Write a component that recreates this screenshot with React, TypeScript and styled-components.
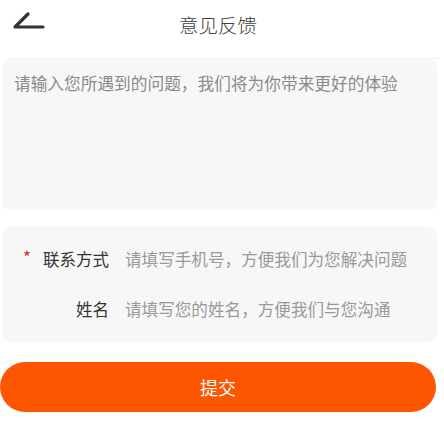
import * as React from 'react';
import styled, { createGlobalStyle } from 'styled-components';

const GlobalStyle = createGlobalStyle`
	body {
		margin: 0;
		background: #ffffff;
		font-family: 'Noto Sans CJK SC', 'Noto Sans', sans-serif;
	}
`;

const Page = styled.div`
	width: 444px;
	padding: 0 7px 0 2px;
	box-sizing: border-box;
`;

const Header = styled.div`
	position: relative;
	height: 59px;
	margin: 0 -1px 0 6px;
	display: flex;
	align-items: center;
	justify-content: center;
	border-bottom: 1px solid #eeeeee;
	box-sizing: border-box;
`;

const BackButton = styled.button`
	position: absolute;
	left: 3px;
	top: 9px;
	width: 34px;
	height: 24px;
	padding: 0;
	border: none;
	background: none;
`;

const Title = styled.h1`
	margin: 0 10px 10px 0;
	font-size: 19.5px;
	font-weight: 300;
	color: #404040;
`;

const Panel = styled.div<{ $height: number }>`
	height: ${props => props.$height}px;
	background: #f7f7f7;
	border-radius: 8px;
	box-sizing: border-box;
`;

const Feedback = styled.div`
	padding: 12px 12px;
	font-size: 16.7px;
	line-height: 24px;
	color: #8a8a8a;
`;

const Form = styled.div`
	margin-top: 17px;
	padding: 7px 0 8px;
	display: flex;
	flex-direction: column;
`;

const Row = styled.div`
	height: 50px;
	display: flex;
	align-items: center;
`;

const Label = styled.div`
	position: relative;
	width: 107px;
	text-align: right;
	font-size: 16.5px;
	color: #333333;
`;

const Star = styled.span`
	position: absolute;
	left: 21px;
	top: -3px;
	color: #d9302a;
	font-size: 17px;
`;

const Placeholder = styled.div`
	margin-left: 16px;
	font-size: 16.6px;
	color: #999999;
`;

const Submit = styled.button`
	margin: 20px 0 0 -2px;
	width: 436px;
	height: 50px;
	border: none;
	border-radius: 25px;
	background: #fe5500;
	color: #ffffff;
	font-family: inherit;
	font-size: 18px;
`;

const BackIcon = () => (
	<svg width="34" height="24" viewBox="0 0 34 24">
		<path d="M17 5 L4 18 L32 18" fill="none" stroke="#333" strokeWidth="3.2" strokeLinecap="round" strokeLinejoin="round" />
	</svg>
);

const App = () => {
	return (
		<Page>
			<GlobalStyle />
			<Header>
				<BackButton>
					<BackIcon />
				</BackButton>
				<Title>意见反馈</Title>
			</Header>
			<Panel $height={151}>
				<Feedback>请输入您所遇到的问题，我们将为你带来更好的体验</Feedback>
			</Panel>
			<Panel as={Form} $height={115}>
				<Row>
					<Label>
						<Star>*</Star>联系方式
					</Label>
					<Placeholder>请填写手机号，方便我们为您解决问题</Placeholder>
				</Row>
				<Row>
					<Label>姓名</Label>
					<Placeholder>请填写您的姓名，方便我们与您沟通</Placeholder>
				</Row>
			</Panel>
			<Submit>提交</Submit>
		</Page>
	);
};

export default App;
